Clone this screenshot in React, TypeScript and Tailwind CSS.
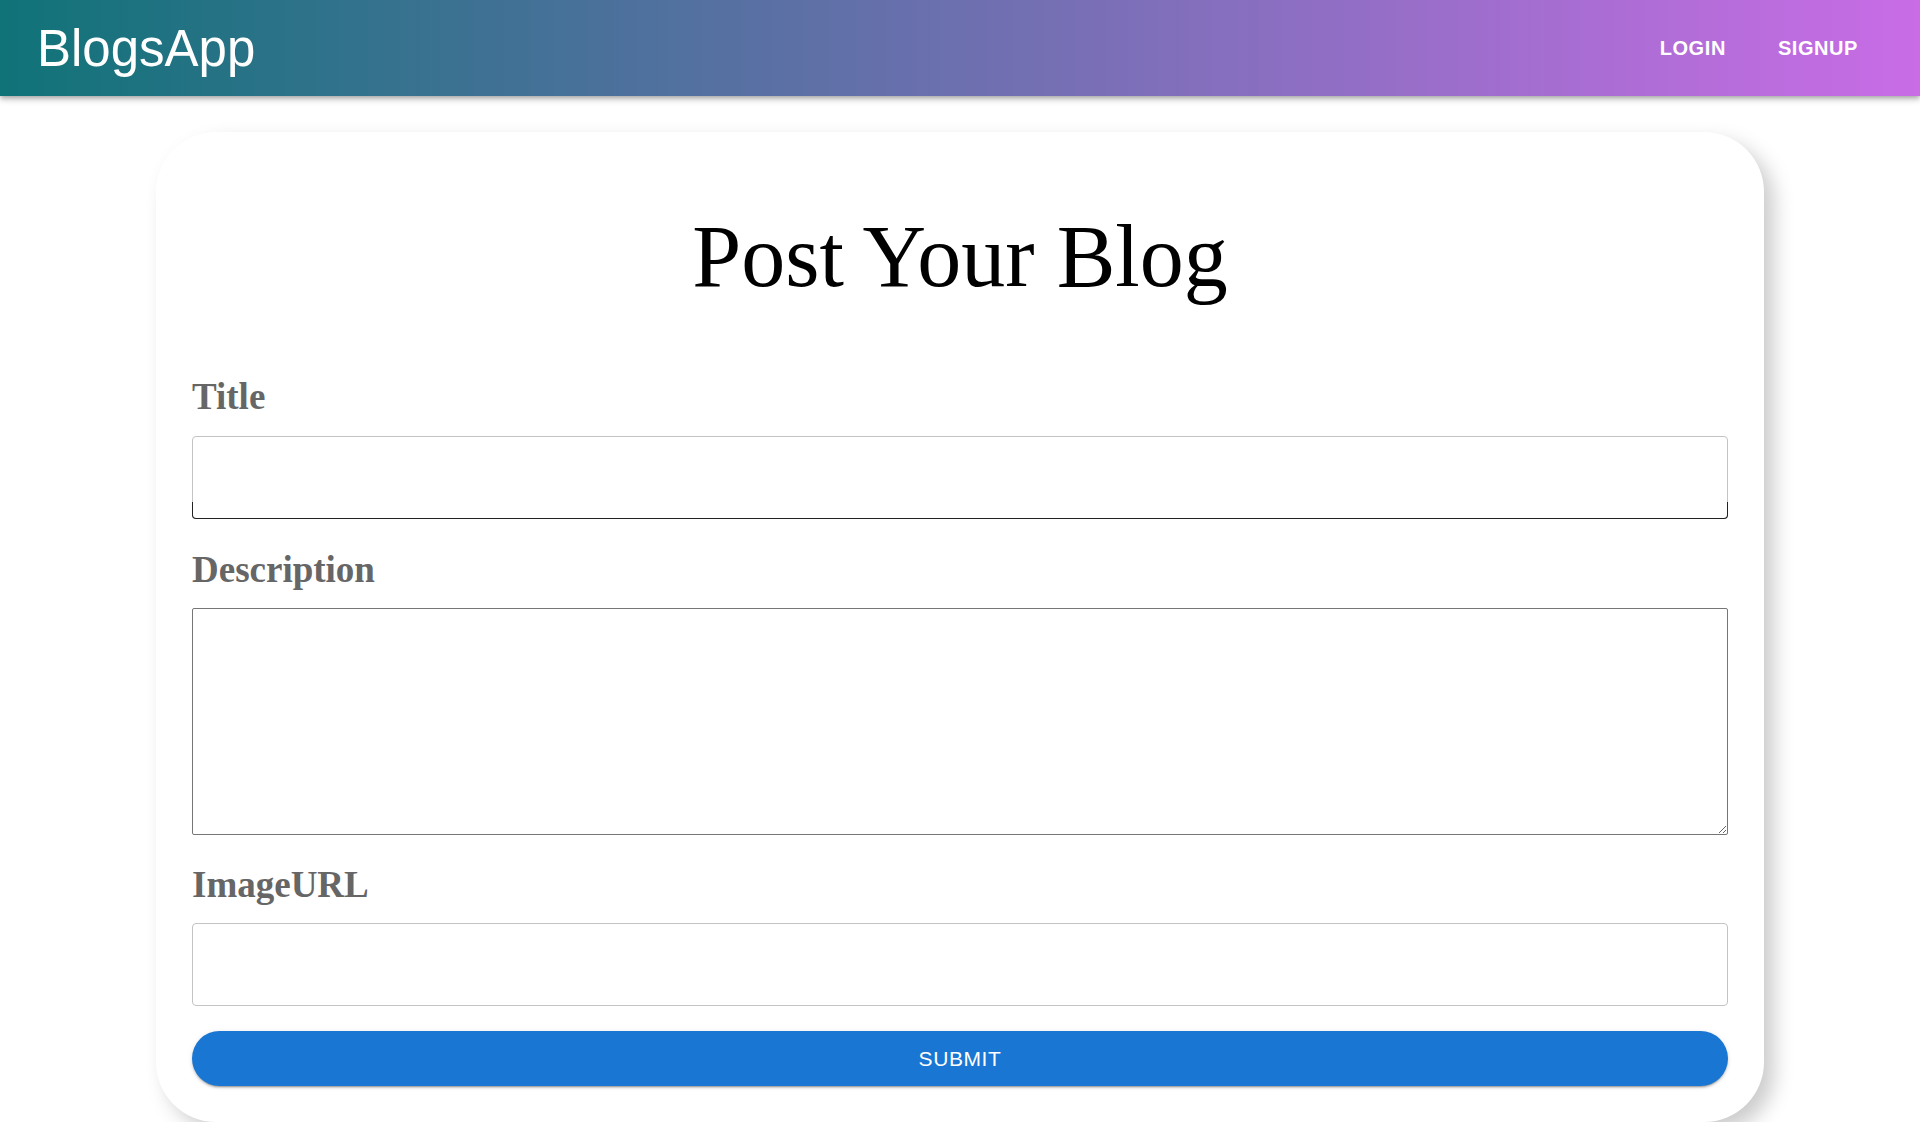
export default function App() {
  return (
    <div className="h-screen w-full overflow-hidden bg-white">
      {/* Top bar */}
      <header className="relative z-10 flex h-[96px] items-center justify-between bg-[linear-gradient(90deg,#107378,#c96ce6)] pl-[37px] pr-[62px] shadow-[0_2px_4px_-1px_rgba(0,0,0,0.2),0_4px_5px_0_rgba(0,0,0,0.14),0_1px_10px_0_rgba(0,0,0,0.12)]">
        <h1 className="font-['Liberation_Sans',Arial,sans-serif] text-[51px] leading-none text-white">
          BlogsApp
        </h1>
        <nav className="flex items-center gap-[52px] font-['Liberation_Sans',Arial,sans-serif] text-white">
          <button className="text-[20px] font-bold uppercase leading-none tracking-[0.02857em]">Login</button>
          <button className="text-[20px] font-bold uppercase leading-none tracking-[0.02857em]">Signup</button>
        </nav>
      </header>

      {/* Form card */}
      <main className="mx-auto mt-[36px] w-[1608px] rounded-[60px] bg-white px-[36px] pb-[36px] pt-[80px] shadow-[10px_10px_20px_#ccc]">
        <h2 className="h-[90px] text-center font-['Liberation_Serif','Times_New_Roman',serif] text-[88px] leading-[90px] text-black">
          Post Your Blog
        </h2>

        <form className="mt-[77px] flex flex-col font-['Liberation_Serif','Times_New_Roman',serif]">
          <label className="h-[36px] text-[37px] font-bold leading-[36px] text-[#666]">Title</label>
          <div className="relative mt-[21px] h-[83px]">
            <input className="h-full w-full rounded-[4px] border border-[#c4c4c4] bg-white px-4 text-[20px] outline-none" />
            <div className="pointer-events-none absolute inset-x-0 bottom-0 h-[17px] rounded-b-[4px] border border-t-0 border-[#222]"></div>
          </div>

          <label className="mt-[33px] h-[36px] text-[37px] font-bold leading-[36px] text-[#666]">Description</label>
          <textarea className="mt-[20px] h-[227px] w-full rounded-[2px] border border-[#767676] bg-white p-2 text-[20px] outline-none"></textarea>

          <label className="mt-[32px] h-[36px] text-[37px] font-bold leading-[36px] text-[#666]">ImageURL</label>
          <input className="mt-[20px] h-[83px] w-full rounded-[4px] border border-[#c4c4c4] bg-white px-4 text-[20px] outline-none" />

          <button
            type="button"
            className="mt-[25px] h-[55px] w-full rounded-full bg-[#1976d2] font-['Liberation_Sans',Arial,sans-serif] text-[21px] uppercase tracking-[0.02857em] text-white shadow-[0_3px_1px_-2px_rgba(0,0,0,0.2),0_2px_2px_0_rgba(0,0,0,0.14),0_1px_5px_0_rgba(0,0,0,0.12)]"
          >
            Submit
          </button>
        </form>
      </main>
    </div>
  );
}
